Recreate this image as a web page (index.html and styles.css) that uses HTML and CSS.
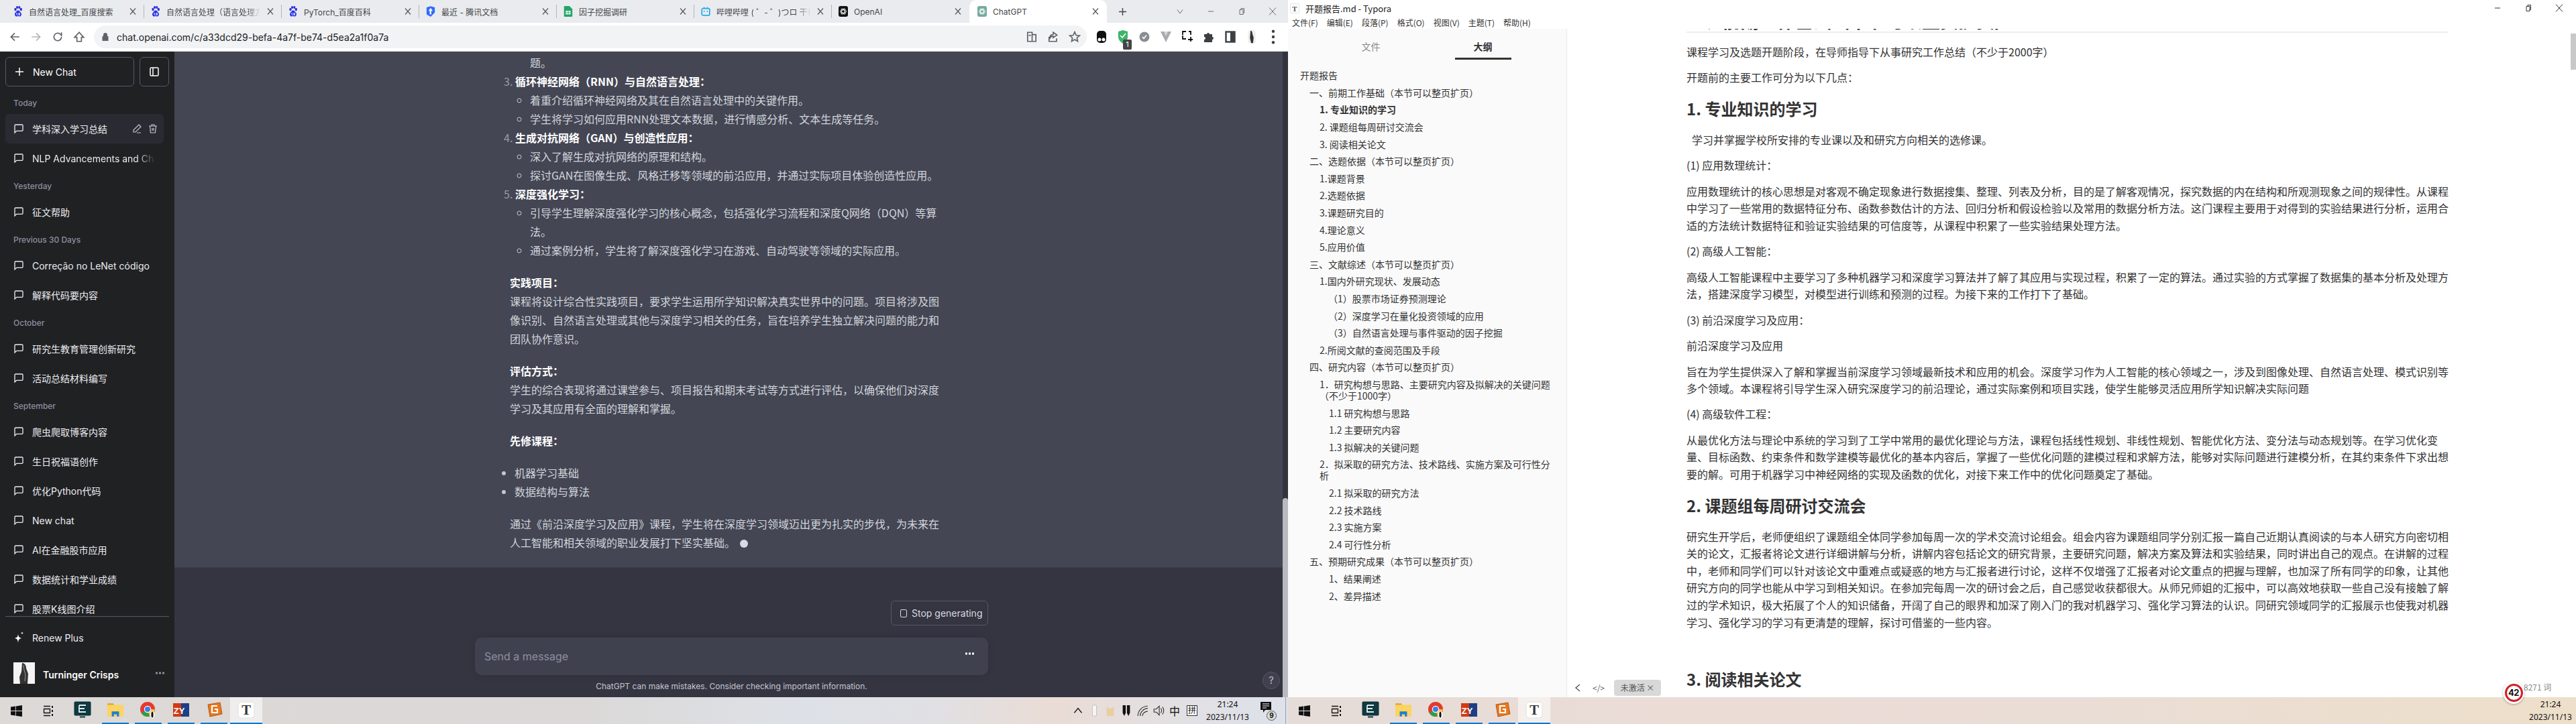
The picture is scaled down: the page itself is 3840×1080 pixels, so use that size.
FILE: index.html
```html
<!DOCTYPE html>
<html lang="zh-CN">
<head>
<meta charset="utf-8">
<title>Dual monitor desktop</title>
<link rel="stylesheet" href="styles.css">
</head>
<body>
<svg class="defs" aria-hidden="true">
  <symbol id="paw" viewBox="0 0 14 16"><g fill="#2932e1"><ellipse cx="3" cy="5" rx="1.7" ry="2.3"/><ellipse cx="5.6" cy="2" rx="1.6" ry="2"/><ellipse cx="8.8" cy="2" rx="1.6" ry="2"/><ellipse cx="11.3" cy="5" rx="1.7" ry="2.3"/><path d="M7 6.5c-2 0-2.6 2-4 3.2C1.6 11 1.6 15 4.4 15.4c1.2.2 1.7-.4 2.6-.4s1.4.6 2.6.4c2.8-.4 2.8-4.400 1.400-5.700C9.600 8.500 9 6.500 7 6.500z"/></g><path d="M5 10v2.400c0 1.200 1.200 1.200 1.500 1.200M8 10v3.400h1.200V10" stroke="#fff" fill="none"/></symbol>
  <symbol id="tdoc" viewBox="0 0 16 18"><path d="M1 2 8 0l7 2v9l-7 7-7-4z" fill="#2f6bff"/><path d="M8 3 4 8h2.500v6H9V8h2.500z" fill="#fff"/></symbol>
  <symbol id="sheet" viewBox="0 0 14 18"><path d="M0 1.500A1.500 1.500 0 0 1 1.500 0H9l5 5v11.500a1.500 1.500 0 0 1-1.500 1.500h-11A1.500 1.500 0 0 1 0 16.500z" fill="#23a566"/><path d="M3 8h8v6H3z" fill="#fff"/><path d="M7 8v6M3 11h8" stroke="#23a566"/></symbol>
  <symbol id="bili" viewBox="0 0 18 18"><path d="M5 1l3 3M13 1l-3 3" stroke="#23ade5" stroke-width="1.600"/><rect x="1.500" y="3.500" width="15" height="13" rx="2.500" fill="none" stroke="#23ade5" stroke-width="2.200"/><circle cx="6" cy="9" r="1.200" fill="#23ade5"/><circle cx="12" cy="9" r="1.200" fill="#23ade5"/></symbol>
  <symbol id="knot" viewBox="0 0 16 16"><g fill="none" stroke="currentColor" stroke-width="1.200"><ellipse cx="8" cy="8" rx="6" ry="3"/><ellipse cx="8" cy="8" rx="6" ry="3" transform="rotate(60 8 8)"/><ellipse cx="8" cy="8" rx="6" ry="3" transform="rotate(120 8 8)"/></g></symbol>
  <symbol id="close" viewBox="0 0 12 12"><path d="M2 1.500 10 10.500M10 1.500 2 10.500" stroke="currentColor" stroke-width="1.200" fill="none"/></symbol>
  <symbol id="bubble" viewBox="0 0 24 24"><path d="M21 15a2 2 0 0 1-2 2H7l-4 4V5a2 2 0 0 1 2-2h14a2 2 0 0 1 2 2z" fill="none" stroke="currentColor" stroke-width="2"/></symbol>
  <symbol id="win" viewBox="0 0 16 16"><path d="M0 2.300 6.500 1.400v6.200H0zM7.300 1.300 16 0v7.600H7.300zM0 8.400h6.500v6.200L0 13.700zM7.300 8.400H16V16l-8.700-1.200z" fill="#111"/></symbol>
  <symbol id="taskview" viewBox="0 0 17 17"><path d="M1 1.500h10M1 15.500h10M1.500 5.500h9v6h-9z" fill="none" stroke="#111" stroke-width="1.300"/><path d="M14 1v3M14 7v3M14 13v3" stroke="#111" stroke-width="2"/></symbol>
  <symbol id="monitor" viewBox="0 0 26 26"><rect x="1" y="1" width="24" height="20" rx="1" fill="#0e3a42" stroke="#0c2a30"/><path d="M8 6h10M8 6v10h10M8 11h8" fill="none" stroke="#dfeff0" stroke-width="1.800"/><rect x="9" y="22.500" width="8" height="2" fill="#0e3a42"/></symbol>
  <symbol id="folder" viewBox="0 0 24 24"><path d="M1 3h8l2 3H1z" fill="#e0a526"/><rect x="1" y="5" width="22" height="16" fill="#fcd45f"/><path d="M7 14h10v7h-3v-3h-4v3H7z" fill="#1f7ed0"/></symbol>
  <symbol id="chrome" viewBox="0 0 26 26"><circle cx="12" cy="12" r="11" fill="#e5392d"/><path d="M12 12 2.500 17.500A11 11 0 0 0 15 22.600z" fill="#2e9e4a"/><path d="M12 12h10.900a11 11 0 0 1-7.900 10.600z" fill="#f6c02c"/><circle cx="12" cy="12" r="5.200" fill="#fff"/><circle cx="12" cy="12" r="4" fill="#3a7ee8"/><ellipse cx="19" cy="20" rx="3.500" ry="5.500" fill="#fff"/><ellipse cx="19" cy="20" rx="1.600" ry="4.500" fill="#111"/></symbol>
  <symbol id="zy" viewBox="0 0 26 24"><path d="M1 2h12v20H1z" fill="#d23a12"/><path d="M13 2h12v20H13z" fill="#1c3f86"/><text x="1.800" y="18" class="tile-letters">ZY</text></symbol>
  <symbol id="gtile" viewBox="0 0 26 26"><path d="M4 5 22 2l3 17-18 4z" fill="#e9781f" stroke="#b8560f"/><path d="M18 7h-8v10h8v-5h-4" fill="none" stroke="#fff" stroke-width="2.200"/></symbol>
  <symbol id="ttile" viewBox="0 0 24 24"><rect x="1" y="1" width="22" height="22" rx="4" fill="#fff" stroke="#e2e2e2"/><text x="12" y="18" class="tile-t">T</text></symbol>
</svg>

<main class="desktop">
  <section class="screen">
    <div class="chrome-win">
      <div class="tabstrip">
        <div class="tab"><svg class="fav"><use href="#paw"/></svg><span class="tab-text">自然语言处理_百度搜索</span><svg class="tab-x"><use href="#close"/></svg></div>
        <div class="tab"><svg class="fav"><use href="#paw"/></svg><span class="tab-text fade">自然语言处理（语言处理方</span><svg class="tab-x"><use href="#close"/></svg></div>
        <div class="tab"><svg class="fav"><use href="#paw"/></svg><span class="tab-text">PyTorch_百度百科</span><svg class="tab-x"><use href="#close"/></svg></div>
        <div class="tab"><svg class="fav"><use href="#tdoc"/></svg><span class="tab-text">最近 - 腾讯文档</span><svg class="tab-x"><use href="#close"/></svg></div>
        <div class="tab"><svg class="fav"><use href="#sheet"/></svg><span class="tab-text">因子挖掘调研</span><svg class="tab-x"><use href="#close"/></svg></div>
        <div class="tab"><svg class="fav"><use href="#bili"/></svg><span class="tab-text fade">哔哩哔哩 ( ゜- ゜)つロ 干杯</span><svg class="tab-x"><use href="#close"/></svg></div>
        <div class="tab tab-last"><svg class="fav fav-openai"><use href="#knot"/></svg><span class="tab-text">OpenAI</span><svg class="tab-x"><use href="#close"/></svg></div>
        <div class="tab tab-active"><svg class="fav fav-gpt"><use href="#knot"/></svg><span class="tab-text">ChatGPT</span><svg class="tab-x"><use href="#close"/></svg></div>
        <div class="new-tab"><svg viewBox="0 0 14 14"><path d="M7 1v12M1 7h12"/></svg></div>
        <div class="winctl chrome-ctl">
          <svg viewBox="0 0 12 12"><path d="M2 3.500 6 9l4-5.500"/></svg>
          <svg viewBox="0 0 12 12"><path d="M2 6h8"/></svg>
          <svg viewBox="0 0 12 12"><path d="M3 3.500h5v7H3zM5 3.500V1.500h4.500v7H8"/></svg>
          <svg viewBox="0 0 12 12"><path d="M1 .5 11 11.500M11 .5 1 11.500"/></svg>
        </div>
      </div>
      <div class="toolbar">
        <svg class="tb-ic" viewBox="0 0 16 16"><path d="M14 8H3M8 3 3 8l5 5"/></svg>
        <svg class="tb-ic tb-dim" viewBox="0 0 16 16"><path d="M2 8h11M8 3l5 5-5 5"/></svg>
        <svg class="tb-ic" viewBox="0 0 16 16"><path d="M13 8a5 5 0 1 1-1.500-3.500L13 6V2"/></svg>
        <svg class="tb-ic" viewBox="0 0 16 16"><path d="M2 8.500 8 2l6 6.500h-3V14H5V8.500z"/></svg>
        <div class="omnibox">
          <svg class="lock" viewBox="0 0 10 14"><path d="M2 6V4a3 3 0 0 1 6 0v2h1.500v7h-9V6z" fill="#5f6368"/></svg>
          <span class="url">chat.openai.com/c/a33dcd29-befa-4a7f-be74-d5ea2a1f0a7a</span>
          <div class="omni-icons">
            <svg class="tb-ic" viewBox="0 0 16 16"><path d="M2.500 2h6v12h-6zM8.500 5h5v9h-5M4 6h3M5.500 5v1"/></svg>
            <svg class="tb-ic" viewBox="0 0 16 16"><path d="M8 2l5 3.500L8 9V7C5.500 7 4 8.500 3 11c0-3.500 2-6 5-6.500zM2.500 8v6h10v-4"/></svg>
            <svg class="tb-ic" viewBox="0 0 16 16"><path d="M8 1.500l1.900 4.300 4.600.5-3.500 3 1 4.600L8 11.500l-4 2.400 1-4.600-3.500-3 4.600-.5z"/></svg>
          </div>
        </div>
        <div class="ext"><svg viewBox="0 0 16 20"><rect x="1" y="1" width="14" height="18" rx="5" fill="#111"/><circle cx="5" cy="14" r="2.500" fill="#fff"/><circle cx="11" cy="14" r="2.500" fill="#fff"/></svg></div>
        <div class="ext ext-badged"><svg viewBox="0 0 16 20"><path d="M1 2 8 0l7 2v8c0 5-4 8-7 10-3-2-7-5-7-10z" fill="#3bb56a"/><path d="M4 8l3 3 5-6" stroke="#fff" stroke-width="1.600" fill="none"/></svg><span class="ext-badge">1</span></div>
        <div class="ext"><svg viewBox="0 0 16 20"><circle cx="8" cy="10" r="7.500" fill="#8a8d91"/><path d="M5 10l2 2.500L11 7.500" stroke="#fff" stroke-width="1.600" fill="none"/></svg></div>
        <div class="ext"><svg viewBox="0 0 16 20"><path d="M0 2h16l-8 16z" fill="#a8abae"/><path d="M5 2h6L8 9z" fill="#d5d7d9"/></svg></div>
        <div class="ext"><svg viewBox="0 0 16 20"><path d="M1 7V2h5M6 13H1V8M10 2h3v5M13 10v7M9 14h8" fill="none" stroke="#111" stroke-width="1.800"/></svg></div>
        <div class="ext"><svg viewBox="0 0 16 20"><path d="M1 6h4a2 2 0 0 1 4 0h4v4a2 2 0 0 1 0 4v4H1v-4a2 2 0 0 0 0-4z" fill="#3c4043"/></svg></div>
        <div class="ext"><svg viewBox="0 0 16 20"><rect x="1.500" y="2.500" width="13" height="15" fill="none" stroke="#3c4043" stroke-width="2.400"/><rect x="8" y="3" width="6" height="14" fill="#3c4043"/></svg></div>
        <div class="ext"><svg viewBox="0 0 16 24"><rect x="2" y="1" width="12" height="22" rx="4" fill="#eee"/><path d="M6 2c2 0 3 2 3 5l2 6-1 9H7L5 14z" fill="#333"/></svg></div>
        <div class="ext"><svg viewBox="0 0 4 16"><circle cx="2" cy="2" r="1.600" fill="#3c4043"/><circle cx="2" cy="8" r="1.600" fill="#3c4043"/><circle cx="2" cy="14" r="1.600" fill="#3c4043"/></svg></div>
      </div>

      <div class="gpt">
        <aside class="gpt-side">
          <div class="side-top">
            <button class="newchat"><svg class="plus" viewBox="0 0 16 16"><path d="M8 2v12M2 8h12"/></svg>New Chat</button>
            <button class="toggle"><svg viewBox="0 0 16 16"><rect x="2" y="2" width="12" height="12" rx="1.500"/><path d="M6 2v12"/></svg></button>
          </div>
          <nav class="history">
            <h3 class="hist-label">Today</h3>
            <a class="hist hist-active"><svg class="bub"><use href="#bubble"/></svg><span class="hist-text">学科深入学习总结</span>
              <svg class="hist-act" viewBox="0 0 16 16"><path d="M11 2l3 3-8 8H3v-3zM8 14h6"/></svg>
              <svg class="hist-act" viewBox="0 0 16 16"><path d="M2 4h12M6 4V2h4v2M3.500 4l1 10h7l1-10M7 7v4M9 7v4"/></svg></a>
            <a class="hist"><svg class="bub"><use href="#bubble"/></svg><span class="hist-text fade-end">NLP Advancements and Chal</span></a>
            <h3 class="hist-label gapped">Yesterday</h3>
            <a class="hist"><svg class="bub"><use href="#bubble"/></svg><span class="hist-text">征文帮助</span></a>
            <h3 class="hist-label gapped">Previous 30 Days</h3>
            <a class="hist"><svg class="bub"><use href="#bubble"/></svg><span class="hist-text">Correção no LeNet código</span></a>
            <a class="hist"><svg class="bub"><use href="#bubble"/></svg><span class="hist-text">解释代码要内容</span></a>
            <h3 class="hist-label gapped">October</h3>
            <a class="hist"><svg class="bub"><use href="#bubble"/></svg><span class="hist-text">研究生教育管理创新研究</span></a>
            <a class="hist"><svg class="bub"><use href="#bubble"/></svg><span class="hist-text">活动总结材料编写</span></a>
            <h3 class="hist-label gapped">September</h3>
            <a class="hist"><svg class="bub"><use href="#bubble"/></svg><span class="hist-text">爬虫爬取博客内容</span></a>
            <a class="hist"><svg class="bub"><use href="#bubble"/></svg><span class="hist-text">生日祝福语创作</span></a>
            <a class="hist"><svg class="bub"><use href="#bubble"/></svg><span class="hist-text">优化Python代码</span></a>
            <a class="hist"><svg class="bub"><use href="#bubble"/></svg><span class="hist-text">New chat</span></a>
            <a class="hist"><svg class="bub"><use href="#bubble"/></svg><span class="hist-text">AI在金融股市应用</span></a>
            <a class="hist"><svg class="bub"><use href="#bubble"/></svg><span class="hist-text">数据统计和学业成绩</span></a>
            <a class="hist"><svg class="bub"><use href="#bubble"/></svg><span class="hist-text">股票K线图介绍</span></a>
          </nav>
          <div class="side-foot">
            <a class="renew"><svg class="spark" viewBox="0 0 16 20"><path d="M7 5c.6 4 1.500 5 5 6-3.500 1-4.400 2-5 7-.6-5-1.500-6-5-7 3.500-1 4.400-2 5-6zM13 1c.2 1.500.6 2 2 2.300-1.400.4-1.800.9-2 2.300-.2-1.400-.6-1.900-2-2.300 1.400-.3 1.800-.8 2-2.300z"/></svg>Renew Plus</a>
            <div class="user">
              <svg class="avatar" viewBox="0 0 32 32"><rect width="32" height="32" fill="#f4f4f4"/><path d="M13 1c4 0 6 4 6 8l3 8-1 15H10l-1-10 3-8z" fill="#333"/><path d="M15 4l1 8 2 6-1 10" stroke="#999" fill="none"/></svg>
              <span class="user-name">Turninger Crisps</span>
              <svg class="dots dots-dim" viewBox="0 0 14 4"><rect x="0" y="0.500" width="3" height="3"/><rect x="5" y="0.500" width="3" height="3"/><rect x="10" y="0.500" width="3" height="3"/></svg>
            </div>
          </div>
        </aside>
        <div class="gpt-main">
          <div class="gpt-body">
            <article class="answer">
              <ul class="sub sub-first"><li class="nomark">题。</li></ul>
              <ol class="topics" start="3">
                <li><strong>循环神经网络（RNN）与自然语言处理：</strong>
                  <ul class="sub"><li>着重介绍循环神经网络及其在自然语言处理中的关键作用。</li><li>学生将学习如何应用RNN处理文本数据，进行情感分析、文本生成等任务。</li></ul></li>
                <li><strong>生成对抗网络（GAN）与创造性应用：</strong>
                  <ul class="sub"><li>深入了解生成对抗网络的原理和结构。</li><li>探讨GAN在图像生成、风格迁移等领域的前沿应用，并通过实际项目体验创造性应用。</li></ul></li>
                <li><strong>深度强化学习：</strong>
                  <ul class="sub"><li>引导学生理解深度强化学习的核心概念，包括强化学习流程和深度Q网络（DQN）等算法。</li><li>通过案例分析，学生将了解深度强化学习在游戏、自动驾驶等领域的实际应用。</li></ul></li>
              </ol>
              <p><strong>实践项目：</strong><br>课程将设计综合性实践项目，要求学生运用所学知识解决真实世界中的问题。项目将涉及图像识别、自然语言处理或其他与深度学习相关的任务，旨在培养学生独立解决问题的能力和团队协作意识。</p>
              <p><strong>评估方式：</strong><br>学生的综合表现将通过课堂参与、项目报告和期末考试等方式进行评估，以确保他们对深度学习及其应用有全面的理解和掌握。</p>
              <p><strong>先修课程：</strong></p>
              <ul class="plain"><li>机器学习基础</li><li>数据结构与算法</li></ul>
              <p>通过《前沿深度学习及应用》课程，学生将在深度学习领域迈出更为扎实的步伐，为未来在人工智能和相关领域的职业发展打下坚实基础。<span class="cursor"></span></p>
            </article>
          </div>
          <div class="gpt-bottom">
            <div class="composer">
              <button class="stop"><span class="stop-sq"></span>Stop generating</button>
              <div class="input"><span class="placeholder">Send a message</span><svg class="dots" viewBox="0 0 14 4"><rect x="0" y="0.500" width="3" height="3"/><rect x="5" y="0.500" width="3" height="3"/><rect x="10" y="0.500" width="3" height="3"/></svg></div>
              <div class="disclaimer">ChatGPT can make mistakes. Consider checking important information.</div>
            </div>
            <div class="help">?</div>
          </div>
        </div>
        <div class="gpt-scroll"><div class="gpt-thumb"></div></div>
      </div>
    </div>
    <footer class="taskbar tb-left">
      <div class="tb-start"><svg class="i-win"><use href="#win"/></svg></div>
      <div class="tb-start"><svg class="i-win"><use href="#taskview"/></svg></div>
      <div class="app app-first"><svg class="i-app"><use href="#monitor"/></svg></div>
      <div class="app open"><svg class="i-app"><use href="#folder"/></svg></div>
      <div class="app open"><svg class="i-app"><use href="#chrome"/></svg></div>
      <div class="app open"><svg class="i-app"><use href="#zy"/></svg></div>
      <div class="app open"><svg class="i-app"><use href="#gtile"/></svg></div>
      <div class="app open active"><svg class="i-app"><use href="#ttile"/></svg></div>
      <div class="tray">
        <svg class="tr" viewBox="0 0 16 16"><path d="M3 11l5-6 5 6" fill="none" stroke="#111" stroke-width="1.300"/></svg>
        <svg class="tr" viewBox="0 0 16 20"><rect x="5" y="1" width="7" height="18" rx="1" fill="#f5f5f5" stroke="#bbb"/></svg>
        <svg class="tr" viewBox="0 0 16 20"><path d="M2 3l3 3h6l3-3v16H2z" fill="#e8cfa0"/></svg>
        <svg class="tr" viewBox="0 0 16 20"><path d="M2 1h5v13l-2.500 5L2 14zM9 1h5v13l-2.500 5L9 14z" fill="#111"/></svg>
        <svg class="tr" viewBox="0 0 16 16"><path d="M2 15C2 8 8 2 15 2M5 15c0-5 5-10 10-10M8 15c0-3 3-6 7-6" fill="none" stroke="#333"/></svg>
        <svg class="tr" viewBox="0 0 16 16"><path d="M2 6h3l4-4v12l-4-4H2zM11 5c1.500 1.500 1.500 4.500 0 6M13 3c2.500 2.500 2.500 7.500 0 10" fill="none" stroke="#333"/></svg>
        <span class="tr-text">中</span>
        <span class="tr-pin">拼</span>
        <div class="clock"><span>21:24</span><span>2023/11/13</span></div>
        <div class="notif"><svg viewBox="0 0 16 20"><path d="M0 1h16v12H7l-3 4v-4H0z" fill="#111"/><path d="M3 4h10M3 7h10M3 10h6" stroke="#fff"/></svg><span class="notif-n">9</span></div>
      </div>
      <span class="show-desk"></span>
    </footer>
  </section>

  <section class="screen">
    <div class="typora">
      <div class="ty-title">
        <span class="ty-logo">T</span>
        <span class="ty-name">开题报告.md - Typora</span>
        <div class="winctl ty-ctl">
          <svg viewBox="0 0 12 12"><path d="M2 6h8"/></svg>
          <svg viewBox="0 0 12 12"><path d="M3 3.500h5v7H3zM5 3.500V1.500h4.500v7H8"/></svg>
          <svg viewBox="0 0 12 12"><path d="M1 .5 11 11.500M11 .5 1 11.500"/></svg>
        </div>
      </div>
      <div class="ty-menu"><span>文件(F)</span><span>编辑(E)</span><span>段落(P)</span><span>格式(O)</span><span>视图(V)</span><span>主题(T)</span><span>帮助(H)</span></div>
      <div class="ty-body">
        <aside class="ty-side">
          <div class="ty-tabs"><div class="ty-tab">文件</div><div class="ty-tab ty-tab-on"><span>大纲</span></div></div>
          <ul class="outline">
            <li class="l1">开题报告</li>
            <li class="l2">一、前期工作基础（本节可以整页扩页）</li>
            <li class="l3 cur">1. 专业知识的学习</li>
            <li class="l3">2. 课题组每周研讨交流会</li>
            <li class="l3">3. 阅读相关论文</li>
            <li class="l2">二、选题依据（本节可以整页扩页）</li>
            <li class="l3">1.课题背景</li>
            <li class="l3">2.选题依据</li>
            <li class="l3">3.课题研究目的</li>
            <li class="l3">4.理论意义</li>
            <li class="l3">5.应用价值</li>
            <li class="l2">三、文献综述（本节可以整页扩页）</li>
            <li class="l3">1.国内外研究现状、发展动态</li>
            <li class="l4">（1）股票市场证券预测理论</li>
            <li class="l4">（2）深度学习在量化投资领域的应用</li>
            <li class="l4">（3）自然语言处理与事件驱动的因子挖掘</li>
            <li class="l3">2.所阅文献的查阅范围及手段</li>
            <li class="l2">四、研究内容（本节可以整页扩页）</li>
            <li class="l3">1．研究构想与思路、主要研究内容及拟解决的关键问题（不少于1000字）</li>
            <li class="l5">1.1 研究构想与思路</li>
            <li class="l5">1.2 主要研究内容</li>
            <li class="l5">1.3 拟解决的关键问题</li>
            <li class="l3">2．拟采取的研究方法、技术路线、实施方案及可行性分析</li>
            <li class="l5">2.1 拟采取的研究方法</li>
            <li class="l5">2.2 技术路线</li>
            <li class="l5">2.3 实施方案</li>
            <li class="l5">2.4 可行性分析</li>
            <li class="l2">五、预期研究成果（本节可以整页扩页）</li>
            <li class="l5">1、结果阐述</li>
            <li class="l5">2、差异描述</li>
          </ul>
        </aside>
        <div class="doc">
          <article class="doc-in">
            <h1>一、前期工作基础（本节可以整页扩页）</h1>
            <p>课程学习及选题开题阶段，在导师指导下从事研究工作总结（不少于2000字）</p>
            <p>开题前的主要工作可分为以下几点：</p>
            <h2>1. 专业知识的学习</h2>
            <p class="indent">学习并掌握学校所安排的专业课以及和研究方向相关的选修课。</p>
            <p>(1) 应用数理统计：</p>
            <p>应用数理统计的核心思想是对客观不确定现象进行数据搜集、整理、列表及分析，目的是了解客观情况，探究数据的内在结构和所观测现象之间的规律性。从课程中学习了一些常用的数据特征分布、函数参数估计的方法、回归分析和假设检验以及常用的数据分析方法。这门课程主要用于对得到的实验结果进行分析，运用合适的方法统计数据特征和验证实验结果的可信度等，从课程中积累了一些实验结果处理方法。</p>
            <p>(2) 高级人工智能：</p>
            <p>高级人工智能课程中主要学习了多种机器学习和深度学习算法并了解了其应用与实现过程，积累了一定的算法。通过实验的方式掌握了数据集的基本分析及处理方法，搭建深度学习模型，对模型进行训练和预测的过程。为接下来的工作打下了基础。</p>
            <p>(3) 前沿深度学习及应用：</p>
            <p>前沿深度学习及应用</p>
            <p>旨在为学生提供深入了解和掌握当前深度学习领域最新技术和应用的机会。深度学习作为人工智能的核心领域之一，涉及到图像处理、自然语言处理、模式识别等多个领域。本课程将引导学生深入研究深度学习的前沿理论，通过实际案例和项目实践，使学生能够灵活应用所学知识解决实际问题</p>
            <p>(4) 高级软件工程：</p>
            <p>从最优化方法与理论中系统的学习到了工学中常用的最优化理论与方法，课程包括线性规划、非线性规划、智能优化方法、变分法与动态规划等。在学习优化变量、目标函数、约束条件和数学建模等最优化的基本内容后，掌握了一些优化问题的建模过程和求解方法，能够对实际问题进行建模分析，在其约束条件下求出想要的解。可用于机器学习中神经网络的实现及函数的优化，对接下来工作中的优化问题奠定了基础。</p>
            <h2>2. 课题组每周研讨交流会</h2>
            <p>研究生开学后，老师便组织了课题组全体同学参加每周一次的学术交流讨论组会。组会内容为课题组同学分别汇报一篇自己近期认真阅读的与本人研究方向密切相关的论文，汇报者将论文进行详细讲解与分析，讲解内容包括论文的研究背景，主要研究问题，解决方案及算法和实验结果，同时讲出自己的观点。在讲解的过程中，老师和同学们可以针对该论文中重难点或疑惑的地方与汇报者进行讨论，这样不仅增强了汇报者对论文重点的把握与理解，也加深了所有同学的印象，让其他研究方向的同学也能从中学习到相关知识。在参加完每周一次的研讨会之后，自己感觉收获都很大。从师兄师姐的汇报中，可以高效地获取一些自己没有接触了解过的学术知识，极大拓展了个人的知识储备，开阔了自己的眼界和加深了刚入门的我对机器学习、强化学习算法的认识。同研究领域同学的汇报展示也使我对机器学习、强化学习的学习有更清楚的理解，探讨可借鉴的一些内容。</p>
            <p>&nbsp;</p>
            <h2>3. 阅读相关论文</h2>
          </article>
          <div class="doc-thumb"></div>
          <svg class="doc-tool doc-back" viewBox="0 0 10 12"><path d="M8 1 2 6l6 5"/></svg>
          <span class="doc-tool doc-src">&lt;/&gt;</span>
          <span class="chip">未激活 ×</span>
          <span class="wordcount">8271 词</span>
        </div>
      </div>
    </div>
    <footer class="taskbar tb-right">
      <div class="tb-start"><svg class="i-win"><use href="#win"/></svg></div>
      <div class="tb-start"><svg class="i-win"><use href="#taskview"/></svg></div>
      <div class="app app-first"><svg class="i-app"><use href="#monitor"/></svg></div>
      <div class="app open"><svg class="i-app"><use href="#folder"/></svg></div>
      <div class="app open"><svg class="i-app"><use href="#chrome"/></svg></div>
      <div class="app open"><svg class="i-app"><use href="#zy"/></svg></div>
      <div class="app open"><svg class="i-app"><use href="#gtile"/></svg></div>
      <div class="app open active"><svg class="i-app"><use href="#ttile"/></svg></div>
      <div class="tray"><div class="clock"><span>21:24</span><span>2023/11/13</span></div></div>
      <div class="speed"><span class="speed-ring">42</span></div>
    </footer>
  </section>
</main>
</body>
</html>
```

FILE: styles.css
```css
* { box-sizing: border-box; }
html, body { margin: 0; padding: 0; }
body {
  width: 3840px;
  height: 1080px;
  overflow: hidden;
  font-family: "Inter", "Noto Sans CJK SC", sans-serif;
}
.defs { display: none; }
.tile-letters { font: 700 13px "Liberation Sans", sans-serif; fill: #fff; }
.tile-t { font: 700 19px "Liberation Serif", serif; fill: #333; text-anchor: middle; }

.desktop { display: flex; width: 3840px; height: 1080px; }
.screen { width: 1920px; height: 1080px; display: flex; flex-direction: column; flex: none; }

/* ---------- Chrome ---------- */
.chrome-win { height: 1040px; display: flex; flex-direction: column; overflow: hidden; }
.tabstrip {
  height: 34px;
  flex: none;
  display: flex;
  align-items: stretch;
  padding-left: 10px;
  background: #e9ebee;
  font-size: 12px;
  color: #45474a;
}
.tab {
  width: 205px;
  flex: none;
  display: flex;
  align-items: center;
  padding: 0 6px 0 10px;
  background-image: linear-gradient(#b4b6ba, #b4b6ba);
  background-size: 1px 20px;
  background-position: right center;
  background-repeat: no-repeat;
}
.tab-last { background-image: none; }
.tab-active { background: #fff; border-radius: 10px 10px 0 0; padding-left: 12px; }
.fav { width: 14px; height: 16px; flex: none; margin-right: 9px; }
.fav-openai { background: #111; color: #fff; border-radius: 3px; padding: 1px; }
.fav-gpt { background: #74aa9c; color: #fff; border-radius: 3px; padding: 1px; }
.tab-text { flex: 1; min-width: 0; white-space: nowrap; overflow: hidden; margin-right: 4px; }
.tab-text.fade { -webkit-mask-image: linear-gradient(90deg, #000 82%, transparent 97%); mask-image: linear-gradient(90deg, #000 82%, transparent 97%); }
.tab-x { width: 12px; height: 12px; flex: none; margin-right: 5px; color: #55585c; }
.new-tab { width: 46px; display: flex; align-items: center; justify-content: center; }
.new-tab svg { width: 13px; height: 13px; fill: none; stroke: #45474a; stroke-width: 1.6; }
.winctl { display: flex; margin-left: auto; }
.winctl svg { width: 46px; height: 12px; fill: none; stroke: #6b6e72; stroke-width: 1; }
.chrome-ctl { align-items: center; }
.toolbar {
  height: 43px;
  flex: none;
  background: #fff;
  border-bottom: 1px solid #d8dadd;
  display: flex;
  align-items: center;
  padding-left: 6px;
}
.tb-ic { width: 32px; height: 18px; flex: none; fill: none; stroke: #5f6368; stroke-width: 1.5; }
.tb-dim { stroke: #b3b6ba; }
.omnibox {
  width: 1480px;
  height: 34px;
  margin: 0 6px;
  background: #f1f3f4;
  border-radius: 17px;
  display: flex;
  align-items: center;
  padding: 0 2px 0 12px;
}
.lock { width: 10px; height: 14px; flex: none; margin-right: 12px; }
.url { font-size: 14px; color: #202124; white-space: nowrap; }
.omni-icons { margin-left: auto; display: flex; }
.ext { width: 32px; height: 26px; flex: none; display: flex; align-items: center; justify-content: center; position: relative; }
.ext svg { width: 16px; height: 22px; }
.ext-badge {
  position: absolute; right: 3px; bottom: -6px;
  width: 13px; height: 15px;
  background: #444; color: #fff;
  font-size: 11px; line-height: 15px; text-align: center;
  border-radius: 2px;
}

/* ---------- ChatGPT ---------- */
.gpt { flex: 1; min-height: 0; display: flex; background: #343541; }
.gpt-side {
  width: 260px; flex: none;
  background: #202123;
  display: flex; flex-direction: column;
  color: #ececf1;
  font-size: 14px;
}
.side-top { display: flex; gap: 8px; padding: 8px 8px 0; flex: none; }
.newchat, .toggle {
  height: 44px;
  background: transparent;
  border: 1px solid #565869;
  border-radius: 6px;
  color: #fff;
  font: inherit;
  padding: 0;
  display: flex; align-items: center;
}
.newchat { width: 192px; padding-left: 12px; gap: 12px; }
.plus { width: 16px; height: 16px; fill: none; stroke: #fff; stroke-width: 1.5; }
.toggle { width: 44px; justify-content: center; }
.toggle svg { width: 16px; height: 16px; fill: none; stroke: #fff; stroke-width: 1.5; }
.history {
  flex: 1; min-height: 0;
  margin: 0 0 0 8px;
  width: 244px;
  padding-top: 9px;
  overflow: hidden;
  border-bottom: 1px solid #565869;
}
.hist-label {
  margin: 0;
  height: 32px;
  line-height: 32px;
  padding-left: 12px;
  font-size: 12px;
  font-weight: 500;
  color: #8e8ea0;
}
.hist-label.gapped { margin-top: 4px; }
.hist {
  height: 44px;
  width: 236px;
  display: flex;
  align-items: center;
  padding: 0 8px 0 12px;
  border-radius: 6px;
}
.hist-active { background: #2a2b32; }
.bub { width: 16px; height: 16px; flex: none; margin-right: 12px; color: #ececf1; }
.hist-text { white-space: nowrap; overflow: hidden; flex: 1; min-width: 0; }
.fade-end { -webkit-mask-image: linear-gradient(90deg, #000 84%, transparent 100%); mask-image: linear-gradient(90deg, #000 84%, transparent 100%); flex: none; width: 184px; }
.hist-act { width: 16px; height: 16px; flex: none; margin-left: 8px; fill: none; stroke: #c5c5d2; stroke-width: 1.2; }
.side-foot { flex: none; height: 120px; padding: 9px 8px 0; }
.renew { display: flex; align-items: center; height: 44px; padding-left: 12px; gap: 12px; }
.spark { width: 16px; height: 20px; fill: #fff; flex: none; }
.user { display: flex; align-items: center; height: 32px; margin-top: 15px; padding-left: 12px; gap: 12px; }
.avatar { width: 32px; height: 32px; flex: none; }
.user-name { font-weight: 600; color: #fff; white-space: nowrap; margin-top: 4px; }
.dots { width: 14px; height: 4px; fill: #fff; flex: none; }
.dots-dim { fill: #8e8ea0; margin-left: auto; margin-right: 6px; }

.gpt-main { flex: 1; min-width: 0; display: flex; flex-direction: column; }
.gpt-body { height: 770px; flex: none; background: #444654; border-bottom: 1px solid #3d3e4a; overflow: hidden; padding: 2px 0 0 500px; }
.answer { width: 644px; font-size: 16px; line-height: 28px; color: #d1d5db; font-family: "Noto Sans CJK SC", "Noto Sans", sans-serif; }
.answer strong { color: #fff; font-weight: 700; }
.answer p { margin: 20px 0; }
.answer ol, .answer ul { margin: 0; padding: 0; }
.topics { margin-left: 8px !important; }
.topics > li::marker { color: #9a9ba6; }
.sub { padding-left: 22px !important; }
.sub-first { padding-left: 30px !important; list-style: none; }
.nomark { list-style: none; }
.sub li::marker, .plain li::marker { color: #c5c7cf; }
.plain { padding-left: 7px !important; }
.cursor { display: inline-block; width: 12px; height: 12px; margin-left: 7px; border-radius: 50%; background: #d9d9e3; vertical-align: -1px; }

.gpt-bottom { flex: 1; min-height: 0; position: relative; background: #343541; padding: 49px 0 0 448px; }
.composer { width: 765px; display: flex; flex-direction: column; }
.stop {
  align-self: flex-end;
  height: 37px;
  width: 145px;
  background: #343541;
  border: 1px solid #565869;
  border-radius: 6px;
  color: #d9d9e3;
  font: inherit;
  font-size: 14px;
  display: flex; align-items: center; gap: 7px;
  padding: 0 0 0 13px;
  white-space: nowrap;
}
.stop-sq { width: 10px; height: 12px; border: 1px solid #d9d9e3; border-radius: 2px; flex: none; }
.input {
  height: 56px;
  margin-top: 18px;
  background: #40414f;
  border-radius: 10px;
  box-shadow: 0 0 12px rgba(0,0,0,.1);
  display: flex; align-items: center; justify-content: space-between;
  padding: 0 20px 0 14px;
}
.input .dots { margin-top: -8px; }
.placeholder { font-size: 16px; color: #8e8ea0; }
.disclaimer { height: 33px; line-height: 33px; text-align: center; font-size: 12px; color: #c5c5d2; }
.help {
  position: absolute; left: 1622px; bottom: 12px;
  width: 26px; height: 26px;
  border-radius: 50%;
  background: #40414f;
  border: 1px solid #565869;
  color: #c5c5d2;
  font-size: 14px; line-height: 24px; text-align: center;
}
.gpt-scroll { width: 8px; flex: none; background: #33333d; display: flex; flex-direction: column; justify-content: flex-end; }
.gpt-thumb { height: 297px; background: #b9b9c2; border-radius: 4px 4px 0 0; }

/* ---------- Taskbar ---------- */
.taskbar { height: 40px; flex: none; display: flex; align-items: stretch; position: relative; }
.tb-left { background: linear-gradient(90deg, #dcd9d7 0%, #dbd8d7 45%, #dde1e7 62%, #e0e0e4 72%, #eadcd5 82%, #e2e0e4 92%, #dde1ea 100%); }
.tb-right { background: linear-gradient(90deg, #e5dcd7 0%, #ebdcd6 30%, #eaddd6 60%, #eddfc9 100%); }
.tb-start { width: 48px; flex: none; display: flex; align-items: center; justify-content: center; }
.i-win { width: 17px; height: 17px; }
.app { width: 40px; margin: 0 4.5px; flex: none; display: flex; align-items: center; justify-content: center; border-bottom: 2px solid transparent; }
.app-first { margin-left: 7px; margin-right: 4px; }
.app.open { border-bottom-color: #0078d4; }
.app.active { width: 48px; margin: 0; background: rgba(255,255,255,.55); }
.i-app { width: 26px; height: 26px; }
.tray { margin-left: auto; display: flex; align-items: center; color: #111; }
.tr { width: 24px; height: 18px; flex: none; }
.tr-text { width: 24px; font-size: 16px; text-align: center; flex: none; }
.tr-pin { width: 16px; height: 16px; margin: 0 9px 0 6px; border: 1px solid #333; background: #fff; font-size: 12px; line-height: 14px; text-align: center; flex: none; }
.clock { width: 72px; display: flex; flex-direction: column; align-items: center; font-size: 12px; line-height: 19px; color: #111; font-family: "Noto Sans", sans-serif; }
.notif { width: 42px; height: 40px; position: relative; display: flex; align-items: center; justify-content: center; }
.notif svg { width: 16px; height: 20px; margin-top: -8px; }
.notif-n { position: absolute; left: 22px; top: 20px; width: 15px; height: 15px; border-radius: 50%; background: #ddd; border: 1px solid #555; font-size: 10px; font-weight: 700; line-height: 13px; text-align: center; }
.show-desk { width: 12px; background: linear-gradient(90deg, transparent 8px, #9a9da3 8px, #9a9da3 9px, transparent 9px); flex: none; }
.tb-right .tray { padding-right: 2px; }
.speed {
  position: absolute; left: 1811px; top: -24px;
  width: 32px; height: 34px;
  border-radius: 50%;
  background: #fff;
  box-shadow: 0 1px 3px rgba(0,0,0,.3);
  display: flex; align-items: center; justify-content: center;
}
.speed-ring {
  width: 27px; height: 27px;
  border: 3px solid #d3202a;
  border-radius: 50%;
  color: #111;
  font-size: 13px; font-weight: 700; line-height: 21px; text-align: center;
  letter-spacing: -.5px;
}
/* ---------- Typora ---------- */
.typora { height: 1040px; background: #fff; display: flex; flex-direction: column; color: #333; overflow: hidden; font-family: "Noto Sans CJK SC", "Noto Sans", sans-serif; }
.ty-title { height: 24px; flex: none; display: flex; align-items: center; font-size: 13px; color: #222; }
.ty-logo { width: 14px; height: 15px; margin: 0 9px 0 3px; font: 700 11px/14px "Liberation Serif", serif; text-align: center; border: 1px solid #e4e4e4; border-radius: 2px; color: #555; flex: none; }
.ty-ctl { margin-left: auto; padding-right: 2px; }
.ty-ctl svg { stroke: #333; }
.ty-menu { height: 19px; flex: none; display: flex; gap: 13px; padding-left: 6px; font-size: 12px; line-height: 19px; color: #333; }
.ty-body { flex: 1; min-height: 0; display: flex; }
.ty-side { width: 416px; flex: none; background: #fafafa; border-right: 1px solid #e8e8e8; font-size: 14px; color: #333; }
.ty-tabs { height: 46px; padding: 0 41px 0 40px; display: flex; }
.ty-tab { flex: 1; text-align: center; padding-top: 16px; line-height: 20px; color: #8a8a8a; }
.ty-tab-on { color: #333; font-weight: 700; }
.ty-tab-on span { display: inline-block; width: 84px; height: 30px; border-bottom: 3px solid #333; }
.outline { list-style: none; margin: 0; padding: 11px 22px 0 0; }
.outline li { line-height: 17px; padding: 4.3px 0; }
.outline .l1 { padding-left: 18px; }
.outline .l2 { padding-left: 32px; }
.outline .l3 { padding-left: 47px; }
.outline .l4 { padding-left: 60px; }
.outline .l5 { padding-left: 61px; }
.outline .cur { font-weight: 700; }

.doc { flex: 1; min-width: 0; position: relative; overflow: hidden; padding-left: 178px; }
.doc-in { width: 1136px; margin-top: -28px; font-size: 16px; line-height: 25.6px; color: #333; }
.doc-in h1 { margin: 0 0 16px; font-size: 27px; line-height: 32px; font-weight: 700; border-bottom: 2px solid #eee; white-space: nowrap; }
.doc-in h2 { margin: 17.5px 0; font-size: 24px; line-height: 32px; font-weight: 700; }
.doc-in p { margin: 12.8px 0; }
.doc-in .indent { padding-left: 8px; }
.doc-thumb { position: absolute; right: 0; top: 7px; width: 8px; height: 54px; background: #c8c8c8; }
.doc-tool { position: absolute; color: #666; stroke: #555; fill: none; stroke-width: 1.4; }
.doc-back { left: 11px; top: 977px; width: 10px; height: 12px; }
.doc-src { left: 38px; top: 974px; font-size: 12px; line-height: 18px; stroke: none; }
.chip { position: absolute; left: 70px; top: 971px; width: 70px; height: 24px; line-height: 24px; text-align: center; font-size: 12px; color: #555; background: #d8d8d8; border-radius: 4px; }
.wordcount { position: absolute; left: 1426px; top: 973px; font-size: 12px; line-height: 18px; color: #888; white-space: nowrap; }
```
